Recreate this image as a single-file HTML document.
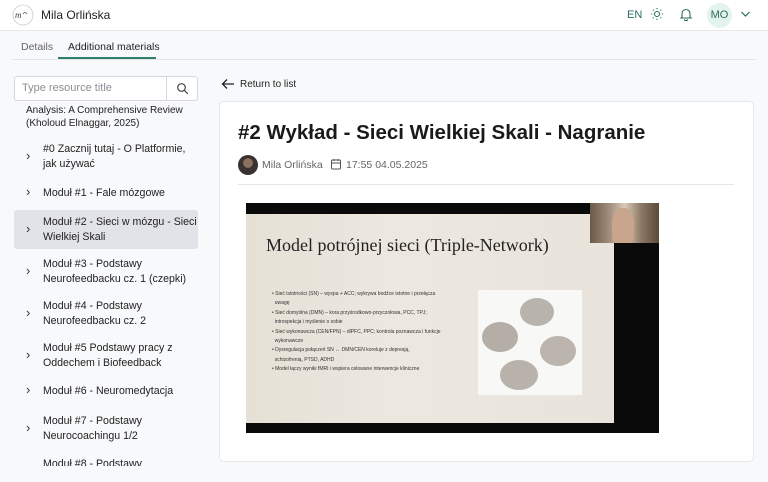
<!DOCTYPE html>
<html><head><meta charset="utf-8"><style>
*{box-sizing:border-box;margin:0;padding:0}
body{width:768px;height:482px;overflow:hidden;background:#f8f9fb;font-family:"Liberation Sans","Noto Sans CJK JP",sans-serif;color:#1f2328;position:relative}
.abs{position:absolute}
.hdr{left:0;top:0;width:768px;height:31px;background:#fff;border-bottom:1px solid #e5e7eb}
.side{font-size:10.6px;color:#222;line-height:14.5px}
.item{position:absolute;left:14px;width:184px;padding-left:29px;white-space:nowrap}
.item:before{content:"›";position:absolute;left:12px;top:50%;transform:translateY(-55%);font-size:13px;color:#333}
</style></head><body>
<div class="abs hdr"></div>
<svg class="abs" style="left:12px;top:4px" width="22" height="22" viewBox="0 0 22 22"><circle cx="11" cy="11" r="10" fill="none" stroke="#ccc" stroke-width="0.8"/><text x="3" y="14" font-size="9" font-style="italic" fill="#444" font-family="Liberation Serif">m</text><path d="M11 10 q2 -3 4 0" stroke="#555" stroke-width=".7" fill="none"/></svg>
<div class="abs" style="left:41px;top:8px;font-size:12px;color:#222">Mila Orlińska</div>
<div class="abs" style="left:627px;top:9px;font-size:11px;color:#2c6b5e">EN</div>
<svg class="abs" style="left:650px;top:7px" width="14" height="14" viewBox="0 0 14 14" stroke="#2c6b5e" fill="none" stroke-width="1.1"><circle cx="7" cy="7" r="2.5"/><path d="M7 1v1.2M7 11.8V13M1 7h1.2M11.8 7H13M2.8 2.8l.8.8M10.4 10.4l.8.8M2.8 11.2l.8-.8M10.4 3.6l.8-.8"/></svg>
<svg class="abs" style="left:679px;top:7px" width="14" height="14" viewBox="0 0 14 14" stroke="#2c6b5e" fill="none" stroke-width="1.1"><path d="M3 10V6.5a4 4 0 0 1 8 0V10l1 1H2z M5.5 12.2a1.5 1.5 0 0 0 3 0"/></svg>
<div class="abs" style="left:707px;top:3px;width:25px;height:25px;border-radius:50%;background:#e3f3ee;color:#2c6b5e;font-size:11px;text-align:center;line-height:25px">MO</div>
<svg class="abs" style="left:740px;top:10px" width="11" height="8" viewBox="0 0 11 8"><path d="M1.5 2l4 4 4-4" stroke="#2c6b5e" stroke-width="1.2" fill="none"/></svg>

<div class="abs" style="left:12px;top:59px;width:744px;height:1px;background:#e3e5e8"></div>
<div class="abs" style="left:21px;top:41px;font-size:10.5px;color:#666">Details</div>
<div class="abs" style="left:68px;top:41px;font-size:10.5px;color:#222">Additional materials</div>
<div class="abs" style="left:58px;top:57px;width:98px;height:2px;background:#2f7d6d"></div>

<div class="abs" style="left:14px;top:76px;width:184px;height:25px;background:#fff;border:1px solid #d4d7dc;border-radius:3px"></div>
<div class="abs" style="left:166px;top:77px;width:1px;height:23px;background:#d4d7dc"></div>
<div class="abs" style="left:22px;top:82px;font-size:11px;color:#8a8f96">Type resource title</div>
<svg class="abs" style="left:176px;top:82px" width="13" height="13" viewBox="0 0 13 13" stroke="#444" fill="none" stroke-width="1.2"><circle cx="5.5" cy="5.5" r="3.8"/><path d="M8.3 8.3l3.5 3.5"/></svg>
<div class="abs side" style="left:26px;top:104px;font-size:10px;line-height:13px">Analysis: A Comprehensive Review<br>(Kholoud Elnaggar, 2025)</div>

<div class="side">
<div class="item" style="top:142px">#0 Zacznij tutaj - O Platformie,<br>jak używać</div>
<div class="item" style="top:186px">Moduł #1 - Fale mózgowe</div>
<div class="item" style="top:210px;height:39px;background:#e2e3e8;border-radius:3px;padding-top:5px">Moduł #2 - Sieci w mózgu - Sieci<br>Wielkiej Skali</div>
<div class="item" style="top:257px">Moduł #3 - Podstawy<br>Neurofeedbacku cz. 1 (czepki)</div>
<div class="item" style="top:299px">Moduł #4 - Podstawy<br>Neurofeedbacku cz. 2</div>
<div class="item" style="top:341px">Moduł #5 Podstawy pracy z<br>Oddechem i Biofeedback</div>
<div class="item" style="top:384px">Moduł #6 - Neuromedytacja</div>
<div class="item" style="top:414px">Moduł #7 - Podstawy<br>Neurocoachingu 1/2</div>
<div class="abs" style="left:43px;top:456px;height:10px;overflow:hidden;width:150px"><div style="padding-top:1px">Moduł #8 - Podstawy</div></div>
</div>

<svg class="abs" style="left:221px;top:78px" width="14" height="12" viewBox="0 0 14 12" stroke="#222" fill="none" stroke-width="1.3"><path d="M13 6H1.5M6 1.5L1.5 6 6 10.5"/></svg>
<div class="abs" style="left:240px;top:79px;font-size:10px;color:#222">Return to list</div>

<div class="abs" style="left:219px;top:101px;width:535px;height:361px;background:#fff;border:1px solid #e6e8eb;border-radius:5px"></div>
<div class="abs" style="left:238px;top:121px;font-size:20.5px;font-weight:bold;color:#1a1a1a;white-space:nowrap">#2 Wykład - Sieci Wielkiej Skali - Nagranie</div>
<div class="abs" style="left:238px;top:155px;width:20px;height:20px;border-radius:50%;background:radial-gradient(circle at 50% 40%,#8a7060 0 30%,#3a3230 32%)"></div>
<div class="abs" style="left:262px;top:159px;font-size:10.5px;color:#666">Mila Orlińska</div>
<svg class="abs" style="left:330px;top:158px" width="12" height="12" viewBox="0 0 12 12" stroke="#555" fill="none" stroke-width="1"><rect x="1.5" y="2" width="9" height="9" rx="1"/><path d="M1.5 5h9M4 1v2M8 1v2"/></svg>
<div class="abs" style="left:346px;top:159px;font-size:10.5px;color:#666">17:55 04.05.2025</div>
<div class="abs" style="left:238px;top:184px;width:496px;height:1px;background:#e3e5e8"></div>

<div class="abs" style="left:246px;top:203px;width:413px;height:230px;background:#0a0a0a"></div>
<div class="abs" style="left:246px;top:214px;width:368px;height:209px;background:linear-gradient(90deg,#e6e0d6,#ece8e0 40%,#e9e4db)"></div>
<div class="abs" style="left:590px;top:203px;width:69px;height:40px;background:linear-gradient(90deg,#6a5a4a,#a59280 30%,#d9c9b8 50%,#8a7763 75%,#5a4a3a)"></div>
<div class="abs" style="left:612px;top:208px;width:22px;height:35px;border-radius:45% 45% 20% 20%;background:#c9a58e"></div>
<div class="abs" style="left:266px;top:235px;font-family:'Liberation Serif',serif;font-size:18px;color:#222;white-space:nowrap">Model potrójnej sieci (Triple-Network)</div>
<div class="abs" style="left:272px;top:290px;font-size:5px;line-height:9.4px;color:#333;width:200px">
• Sieć istotności (SN) – wyspa + ACC; wykrywa bodźce istotne i przełącza<br>&nbsp; uwagę<br>• Sieć domyślna (DMN) – kora przyśrodkowo-przyczołowa, PCC, TPJ;<br>&nbsp; introspekcja i myślenie o sobie<br>• Sieć wykonawcza (CEN/FPN) – dlPFC, PPC; kontrola poznawcza i funkcje<br>&nbsp; wykonawcze<br>• Dysregulacja połączeń SN ↔ DMN/CEN koreluje z depresją,<br>&nbsp; schizofrenią, PTSD, ADHD<br>• Model łączy wyniki fMRI i wspiera celowane interwencje kliniczne</div>
<div class="abs" style="left:478px;top:290px;width:104px;height:105px;background:#f8f8f6"></div>
<div class="abs" style="left:520px;top:298px;width:34px;height:28px;border-radius:50%;background:#b9b3ad"></div>
<div class="abs" style="left:482px;top:322px;width:36px;height:30px;border-radius:50%;background:#b5aea6"></div>
<div class="abs" style="left:540px;top:336px;width:36px;height:30px;border-radius:50%;background:#bbb5ae"></div>
<div class="abs" style="left:500px;top:360px;width:38px;height:30px;border-radius:50%;background:#b8b2ab"></div>
</body></html>
